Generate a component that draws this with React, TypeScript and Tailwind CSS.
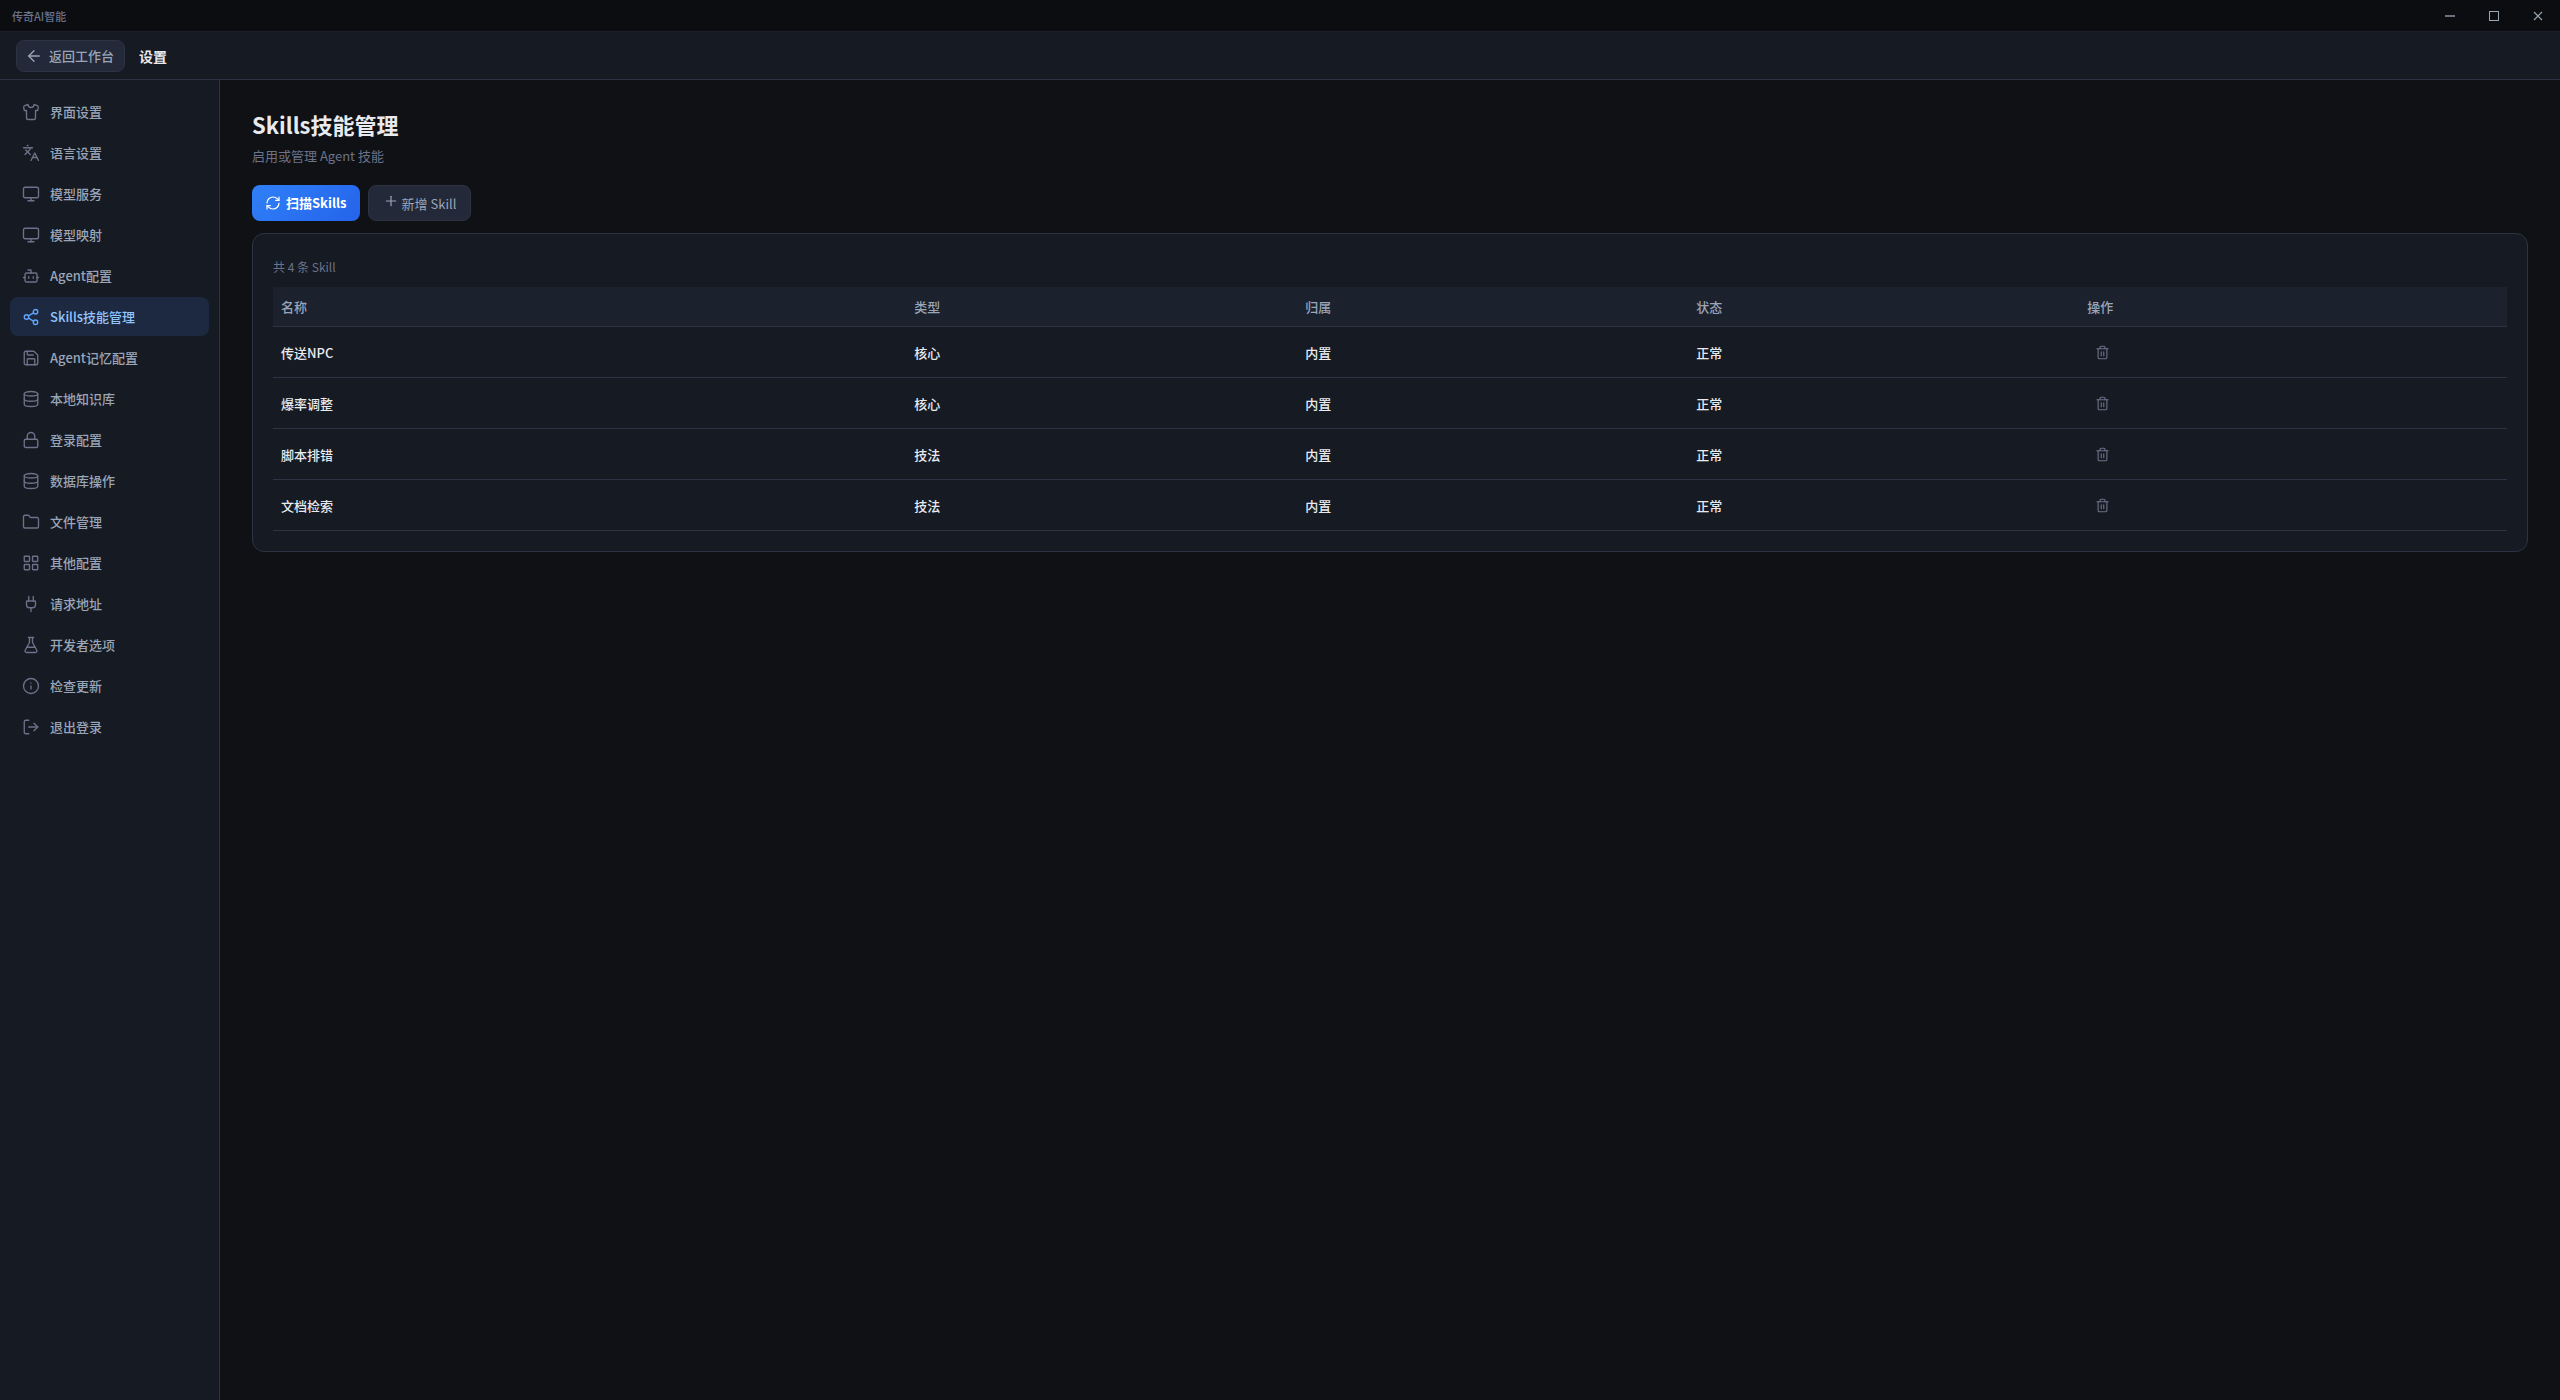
import {
  ArrowLeft,
  Bot,
  Database,
  FlaskConical,
  Folder,
  Info,
  Languages,
  LayoutGrid,
  Lock,
  LogOut,
  Monitor,
  Plug,
  Plus,
  RefreshCw,
  Save,
  Share2,
  Shirt,
  Trash2,
} from 'lucide-react';

const navItems = [
  { id: 'ui', label: '界面设置', icon: Shirt },
  { id: 'language', label: '语言设置', icon: Languages },
  { id: 'model', label: '模型服务', icon: Monitor },
  { id: 'mapping', label: '模型映射', icon: Monitor },
  { id: 'agent', label: 'Agent配置', icon: Bot },
  { id: 'skills', label: 'Skills技能管理', icon: Share2 },
  { id: 'memory', label: 'Agent记忆配置', icon: Save },
  { id: 'knowledge', label: '本地知识库', icon: Database },
  { id: 'login', label: '登录配置', icon: Lock },
  { id: 'database', label: '数据库操作', icon: Database },
  { id: 'files', label: '文件管理', icon: Folder },
  { id: 'other', label: '其他配置', icon: LayoutGrid },
  { id: 'endpoint', label: '请求地址', icon: Plug },
  { id: 'developer', label: '开发者选项', icon: FlaskConical },
  { id: 'update', label: '检查更新', icon: Info },
  { id: 'logout', label: '退出登录', icon: LogOut },
];

const skills = [
  { name: '传送NPC', type: '核心', owner: '内置', status: '正常' },
  { name: '爆率调整', type: '核心', owner: '内置', status: '正常' },
  { name: '脚本排错', type: '技法', owner: '内置', status: '正常' },
  { name: '文档检索', type: '技法', owner: '内置', status: '正常' },
];

const activeId = 'skills';

function TitleBar() {
  return (
    <div className="flex h-8 shrink-0 items-stretch justify-between border-b border-[#1b1f28] bg-[#0c0d10]">
      <span className="flex items-center pl-3 pt-0.5 text-[11px] font-medium text-[#6b7289]">传奇AI智能</span>
      <div className="flex text-[#9aa5b8]">
        <button aria-label="最小化" className="flex w-11 items-center justify-center">
          <span className="h-0.5 w-2.5 bg-[#6b7080]" />
        </button>
        <button aria-label="最大化" className="flex w-11 items-center justify-center">
          <span className="size-2.5 border border-[#9aa5b8]" />
        </button>
        <button aria-label="关闭" className="flex w-11 items-center justify-center">
          <svg width="10" height="10" viewBox="0 0 10 10" stroke="currentColor" strokeWidth="1.2">
            <path d="M1 1l8 8M9 1l-8 8" />
          </svg>
        </button>
      </div>
    </div>
  );
}

function Sidebar() {
  return (
    <nav className="flex w-[220px] shrink-0 flex-col gap-0.5 border-r border-[#2d3343] bg-[#161a22] px-2.5 py-3">
      {navItems.map((item) => {
        const Icon = item.icon;
        const active = item.id === activeId;
        return (
          <button
            key={item.id}
            className={`flex items-center gap-2.5 rounded-lg px-3 py-2.5 text-[13px] leading-[19px] font-medium ${
              active ? 'bg-[#1c2940] text-[#93c5fd]' : 'text-[#9aa5b8]'
            }`}
          >
            <Icon size={18} strokeWidth={1.8} className={active ? 'text-[#60a5fa]' : 'text-[#6b7289]'} />
            {item.label}
          </button>
        );
      })}
    </nav>
  );
}

function SkillsTable() {
  return (
    <table className="w-full table-fixed border-separate border-spacing-0 text-left text-[13px] leading-[19px] font-medium">
      <thead>
        <tr className="h-10 bg-[#1c212e] text-[#9aa5b8]">
          <th className="w-[28.35%] border-b border-[#2d3343] px-2 font-medium">名称</th>
          <th className="w-[17.5%] border-b border-[#2d3343] px-2 font-medium">类型</th>
          <th className="w-[17.5%] border-b border-[#2d3343] px-2 font-medium">归属</th>
          <th className="w-[17.5%] border-b border-[#2d3343] px-2 font-medium">状态</th>
          <th className="border-b border-[#2d3343] px-2 font-medium">操作</th>
        </tr>
      </thead>
      <tbody>
        {skills.map((skill) => (
          <tr key={skill.name} className="h-[51px] text-[#e8eaf0]">
            <td className="border-b border-[#2d3343] px-2">{skill.name}</td>
            <td className="border-b border-[#2d3343] px-2">{skill.type}</td>
            <td className="border-b border-[#2d3343] px-2">{skill.owner}</td>
            <td className="border-b border-[#2d3343] px-2">{skill.status}</td>
            <td className="border-b border-[#2d3343] px-2">
              <button aria-label={`删除 ${skill.name}`} className="flex p-2 text-[#6b7289]">
                <Trash2 size={15} strokeWidth={1.8} />
              </button>
            </td>
          </tr>
        ))}
      </tbody>
    </table>
  );
}

export default function App() {
  return (
    <div className="flex min-h-screen flex-col bg-[#0f1114] font-['Noto_Sans_CJK_SC',sans-serif] text-[#e8eaf0]">
      <TitleBar />

      <header className="flex h-12 shrink-0 items-center gap-3.5 border-b border-[#2d3343] bg-[#161a22] px-4">
        <button className="flex h-8 items-center gap-1.5 rounded-lg border border-[#2d3343] bg-[#232938] pr-2.5 pl-2 text-[13px] font-medium text-[#9aa5b8]">
          <ArrowLeft size={18} strokeWidth={1.8} />
          返回工作台
        </button>
        <span className="text-sm font-bold">设置</span>
      </header>

      <div className="flex flex-1">
        <Sidebar />

        <main className="min-w-0 flex-1 px-8 pt-7">
          <h1 className="text-[22px] leading-8 font-bold">Skills技能管理</h1>
          <p className="mt-1.5 text-[13px] leading-5 text-[#6b7289]">启用或管理 Agent 技能</p>

          <div className="mt-[19px] flex gap-2">
            <button className="flex h-9 items-center gap-[5px] rounded-lg bg-linear-135 from-[#3080f7] to-[#2563eb] px-[13px] text-[13px] font-bold text-white">
              <RefreshCw size={16} strokeWidth={1.8} />
              扫描Skills
            </button>
            <button className="h-9 rounded-lg border border-[#2d3343] bg-[#232938] px-3.5 text-[13px] text-[#9aa5b8]">
              <Plus size={16} strokeWidth={1.8} className="mr-[3px] inline align-baseline" />
              新增 Skill
            </button>
          </div>

          <section className="mt-3 rounded-xl border border-[#2d3343] bg-[#161a22] p-5">
            <p className="mb-2 text-xs leading-[25px] text-[#6b7289]">共 4 条 Skill</p>
            <SkillsTable />
          </section>
        </main>
      </div>
    </div>
  );
}
